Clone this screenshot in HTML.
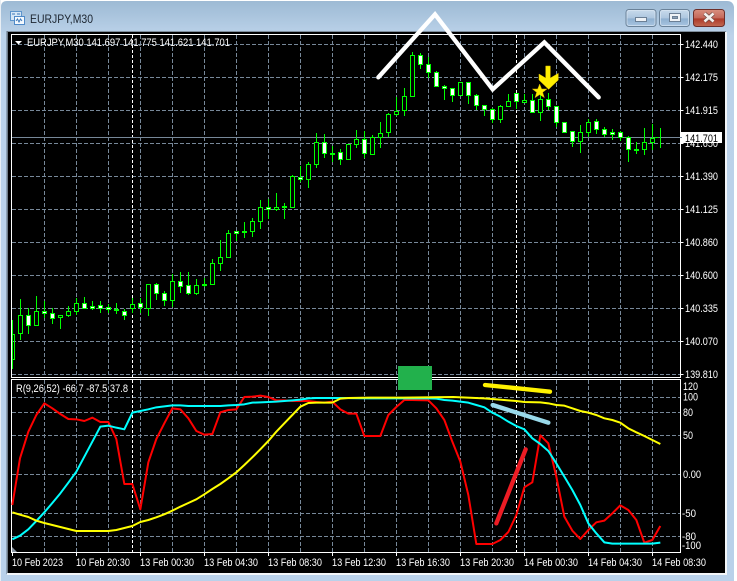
<!DOCTYPE html>
<html><head><meta charset="utf-8"><style>
html,body{margin:0;padding:0;background:#fff;width:737px;height:581px;overflow:hidden}
svg{display:block}
text{font-family:"Liberation Sans",sans-serif;font-size:11px;fill:#fff}
</style></head><body>
<svg width="737" height="581" viewBox="0 0 737 581" xmlns="http://www.w3.org/2000/svg">
<defs>
<linearGradient id="wb" x1="0" y1="0" x2="0" y2="1"><stop offset="0" stop-color="#9dbad4"/><stop offset=".06" stop-color="#bcd3ea"/><stop offset="1" stop-color="#b9d1ea"/></linearGradient>
<linearGradient id="bb" x1="0" y1="0" x2="0" y2="1"><stop offset="0" stop-color="#c9dbec"/><stop offset=".5" stop-color="#adc6df"/><stop offset=".55" stop-color="#8fb0d0"/><stop offset="1" stop-color="#a9c6e2"/></linearGradient>
<linearGradient id="cb" x1="0" y1="0" x2="0" y2="1"><stop offset="0" stop-color="#d8907f"/><stop offset=".5" stop-color="#c4685a"/><stop offset=".55" stop-color="#ad3a28"/><stop offset="1" stop-color="#c26a52"/></linearGradient>
</defs>
<path d="M1 581V7Q1 1 7 1H727Q733 1 734 7V581Z" fill="url(#wb)"/>
<rect x="0" y="0" width="1" height="581" fill="#e8eef4"/>
<rect x="7" y="31" width="719" height="543" fill="#000"/>
<rect x="7" y="31" width="719" height="1" fill="#7f8e9c"/>
<rect x="7" y="31" width="1" height="543" fill="#6d7a86"/>
<rect x="6" y="31" width="1" height="543" fill="#8da0b3"/>
<rect x="7" y="573" width="720" height="2" fill="#f2f5f8"/>
<rect x="725" y="32" width="2" height="543" fill="#f2f5f8"/>

<!-- title bar -->
<g>
<rect x="10.5" y="11.5" width="11" height="9" fill="#d5e6f6" stroke="#5e95cc"/>
<rect x="14.5" y="16.5" width="10" height="8" fill="#f4f9fe" stroke="#4f8ac8"/>
<path d="M12 14h3M17 14h3M16 21l1.500-2 1.500 3 1.500-3 1.500 2" stroke="#3c78b8" fill="none"/>
</g>
<text x="30" y="23" textLength="63" lengthAdjust="spacingAndGlyphs" style="font-size:12px;fill:#1c2530">EURJPY,M30</text>

<rect x="626" y="9.500" width="30" height="17" rx="3" fill="url(#bb)" stroke="#6a8299"/>
<rect x="627" y="10.500" width="28" height="15" rx="2" fill="none" stroke="#d8e5f2" stroke-opacity=".7"/>
<rect x="635.500" y="17.500" width="11" height="4" fill="#eef2f6" stroke="#6b7f95"/>
<rect x="659.500" y="9.500" width="30" height="17" rx="3" fill="url(#bb)" stroke="#6a8299"/>
<rect x="660.500" y="10.500" width="28" height="15" rx="2" fill="none" stroke="#d8e5f2" stroke-opacity=".7"/>
<rect x="669.500" y="13.500" width="11" height="8" fill="#eef2f6" stroke="#6b7f95"/>
<rect x="672.500" y="16.500" width="5" height="2" fill="#8ba0b5" stroke="#6b7f95"/>
<rect x="693.500" y="9.500" width="31" height="17" rx="3" fill="url(#cb)" stroke="#6d2f2a"/>
<path d="M704.500 13.500l9 8M713.500 13.500l-9 8" stroke="#6d4a44" stroke-width="4"/>
<path d="M704.500 13.500l9 8M713.500 13.500l-9 8" stroke="#f4f1ee" stroke-width="2.600"/>

<!-- grid -->
<g stroke="#778899" fill="none" stroke-dasharray="4 2" shape-rendering="crispEdges">
<path d="M12 44.500H680M12 77.500H680M12 110.500H680M12 143.500H680M12 176.500H680M12 209.500H680M12 242.500H680M12 275.500H680M12 308.500H680M12 341.500H680M12 374.500H680"/>
<path d="M12 397.500H680M12 412.500H680M12 435.500H680M12 474.500H680M12 513.500H680M12 536.500H680"/>
<path d="M44.500 35V378M76.500 35V378M108.500 35V378M140.500 35V378M172.500 35V378M204.500 35V378M236.500 35V378M268.500 35V378M300.500 35V378M332.500 35V378M364.500 35V378M396.500 35V378M428.500 35V378M460.500 35V378M492.500 35V378M524.500 35V378M556.500 35V378M588.500 35V378M620.500 35V378M652.500 35V378"/>
<path d="M44.500 380V552M76.500 380V552M108.500 380V552M140.500 380V552M172.500 380V552M204.500 380V552M236.500 380V552M268.500 380V552M300.500 380V552M332.500 380V552M364.500 380V552M396.500 380V552M428.500 380V552M460.500 380V552M492.500 380V552M524.500 380V552M556.500 380V552M588.500 380V552M620.500 380V552M652.500 380V552"/>
</g>
<g stroke="#fff" fill="none" stroke-dasharray="3 2" shape-rendering="crispEdges">
<path d="M132.500 35V378M516.500 35V378M132.500 380V552M516.500 380V552"/>
</g>
<path d="M12 137.500H680" stroke="#778899" shape-rendering="crispEdges"/>

<!-- candles -->
<g stroke="#00ff00" shape-rendering="crispEdges" fill="none">
<path d="M12.500 320V369M20.500 299V340M28.500 308V334M36.500 296V326M44.500 301V318M52.500 308V324M60.500 315V329M68.500 306V317M76.500 298V315M84.500 297V309M92.500 301V310M100.500 301V313M108.500 304V313M116.500 303V314M124.500 309V320M132.500 298V313M140.500 298V313M148.500 284V316M156.500 283V300M164.500 291V306M172.500 274V307M180.500 272V293M188.500 272V295M196.500 279V295M204.500 278V287M212.500 259V284M220.500 240V271M228.500 230V257M236.500 231V241M244.500 222V238M252.500 218V237M260.500 200V229M268.500 199V219M276.500 193V211M284.500 203V219M292.500 175V208M300.500 166V182M308.500 162V188M316.500 133V168M324.500 134V158M332.500 146V162M340.500 149V165M348.500 144V159M356.500 130V148M364.500 131V158M372.500 135V154M380.500 122V148M388.500 113V137M396.500 97V116M404.500 88V116M412.500 52V96M420.500 53V69M428.500 57V78M436.500 71V87M444.500 85V100M452.500 88V102M460.500 82V96M468.500 82V104M476.500 94V110M484.500 105V116M492.500 108V123M500.500 105V123M508.500 94V107M516.500 93V109M524.500 94V103M532.500 94V113M540.500 94V121M548.500 93V110M556.500 106V127M564.500 122V132M572.500 131V147M580.500 125V153M588.500 119V137M596.500 119V134M604.500 127V137M612.500 129V140M620.500 131V141M628.500 136V162M636.500 142V154M644.500 128V155M652.500 124V150M660.500 128V148"/>
<path d="M12 334.500H14.500V359.500H12"/>
<path fill="#000" d="M18.500 315.500h4V333.500h-4zM34.500 311.500h4V325.500h-4zM58.500 315.500h4V317.500h-4zM66.500 311.500h4V315.500h-4zM74.500 303.500h4V311.500h-4zM130.500 304.500h4V308.500h-4zM146.500 284.500h4V308.500h-4zM170.500 281.500h4V300.500h-4zM194.500 285.500h4V293.500h-4zM210.500 263.500h4V284.500h-4zM218.500 257.500h4V263.500h-4zM226.500 233.500h4V257.500h-4zM250.500 221.500h4V231.500h-4zM258.500 207.500h4V221.500h-4zM274.500 207.500h4V209.500h-4zM290.500 176.500h4V207.500h-4zM306.500 164.500h4V179.500h-4zM314.500 142.500h4V164.500h-4zM346.500 144.500h4V159.500h-4zM354.500 139.500h4V144.500h-4zM370.500 137.500h4V154.500h-4zM378.500 133.500h4V137.500h-4zM386.500 114.500h4V132.500h-4zM394.500 111.500h4V114.500h-4zM402.500 96.500h4V110.500h-4zM410.500 55.500h4V96.500h-4zM458.500 82.500h4V95.500h-4zM498.500 106.500h4V119.500h-4zM506.500 101.500h4V106.500h-4zM522.500 100.500h4V102.500h-4zM538.500 99.500h4V112.500h-4zM578.500 132.500h4V141.500h-4zM586.500 122.500h4V132.500h-4zM642.500 142.500h4V149.500h-4zM650.500 138.500h4V142.500h-4z"/>
<path fill="#fff" d="M26.500 315.500h4V325.500h-4zM42.500 311.500h4V313.500h-4zM50.500 313.500h4V318.500h-4zM82.500 303.500h4V308.500h-4zM90.500 306.500h4V308.500h-4zM98.500 305.500h4V308.500h-4zM106.500 307.500h4V309.500h-4zM114.500 309.500h4V310.500h-4zM122.500 311.500h4V315.500h-4zM138.500 303.500h4V307.500h-4zM154.500 284.500h4V293.500h-4zM162.500 293.500h4V300.500h-4zM178.500 281.500h4V286.500h-4zM186.500 285.500h4V293.500h-4zM202.500 284.500h4V285.500h-4zM234.500 231.500h4V233.500h-4zM242.500 231.500h4V232.500h-4zM266.500 207.500h4V209.500h-4zM282.500 206.500h4V207.500h-4zM298.500 177.500h4V179.500h-4zM322.500 142.500h4V153.500h-4zM330.500 153.500h4V154.500h-4zM338.500 152.500h4V159.500h-4zM362.500 139.500h4V153.500h-4zM418.500 55.500h4V64.500h-4zM426.500 64.500h4V72.500h-4zM434.500 72.500h4V86.500h-4zM442.500 86.500h4V88.500h-4zM450.500 88.500h4V95.500h-4zM466.500 82.500h4V95.500h-4zM474.500 95.500h4V105.500h-4zM482.500 105.500h4V109.500h-4zM490.500 109.500h4V119.500h-4zM514.500 93.500h4V101.500h-4zM530.500 100.500h4V112.500h-4zM546.500 99.500h4V106.500h-4zM554.500 106.500h4V122.500h-4zM562.500 122.500h4V132.500h-4zM570.500 131.500h4V141.500h-4zM594.500 121.500h4V129.500h-4zM602.500 129.500h4V134.500h-4zM610.500 132.500h4V134.500h-4zM618.500 132.500h4V137.500h-4zM626.500 137.500h4V149.500h-4zM634.500 149.500h4V150.500h-4zM658.500 137.500h-4"/>
</g>

<!-- panes -->
<g stroke="#fff" fill="none" shape-rendering="crispEdges">
<path d="M11.500 34.500H680.500V377.500H11.500ZM11.500 379.500H680.500V552.500H11.500Z"/>
<path d="M680.500 44.500h3M680.500 77.500h3M680.500 110.500h3M680.500 143.500h3M680.500 176.500h3M680.500 209.500h3M680.500 242.500h3M680.500 275.500h3M680.500 308.500h3M680.500 341.500h3M680.500 374.500h3"/>
<path d="M12.500 552V556M76.500 552V556M140.500 552V556M204.500 552V556M268.500 552V556M332.500 552V556M396.500 552V556M460.500 552V556M524.500 552V556M588.500 552V556M652.500 552V556"/>
</g>
<path d="M12 547L17 552H12Z" fill="#8a96a2"/>

<!-- header text -->
<path d="M15 41h7l-3.500 3.500z" fill="#fff"/>
<text x="27" y="46" textLength="203" lengthAdjust="spacingAndGlyphs">EURJPY,M30  141.697 141.775 141.621 141.701</text>
<text x="16" y="392" textLength="112" lengthAdjust="spacingAndGlyphs">R(9,26,52) -66.7 -87.5 37.8</text>

<!-- indicator -->
<g transform="translate(0 370) scale(.33333)" fill="none" stroke-width="6" stroke-linejoin="round">
<polyline stroke="#ff0000" points="37,405 60,265 85,185 109,135 133,100 157,115 181,132 205,147 229,148 253,153 277,143 301,156 325,156 349,207 373,342 397,342 421,418 445,277 469,207 493,160 517,115 541,118 565,145 589,183 613,194 637,192 661,127 685,120 709,118 733,81 757,80 781,77 805,81 829,91 853,91 877,93 901,93 925,93 949,96 973,98 997,95 1021,118 1045,131 1069,131 1093,198 1110,198"/>
</g>
<g transform="translate(370 370) scale(.33333)" fill="none" stroke-width="6" stroke-linejoin="round">
<polyline stroke="#ff0000" points="0,198 31,198 55,135 79,111 103,90 127,90 175,91 199,115 223,150 247,215 271,275 295,375 319,522 343,522 367,522 391,510 415,486 439,435 463,352 487,337 511,196 535,220 559,320 583,440 607,482 631,507 655,480 679,457 703,452 727,430 751,406 775,420 799,450 823,518 847,510 871,468"/>
</g>
<g transform="translate(0 370) scale(.33333)" fill="none" stroke-width="6" stroke-linejoin="round">
<polyline stroke="#00ffff" points="37,508 60,497 85,478 109,453 133,427 157,399 181,370 205,338 229,305 253,260 277,215 301,170 325,167 349,173 373,178 397,128 421,123 445,118 469,112 493,109 517,106 541,106 565,108 589,108 613,108 637,108 661,108 685,106 709,105 733,103 757,98 781,97 805,96 829,95 853,93 877,91 901,89 925,85 949,84 973,84 997,84 1021,84 1110,85"/>
</g>
<g transform="translate(370 370) scale(.33333)" fill="none" stroke-width="6" stroke-linejoin="round">
<polyline stroke="#00ffff" points="0,85 175,85 199,86 223,90 247,92 271,95 295,98 319,105 343,112 367,128 391,140 415,155 439,168 463,178 487,205 511,222 535,243 559,280 583,320 607,360 631,405 655,460 679,490 703,517 727,521 751,521 775,521 799,521 823,521 847,521 871,518"/>
</g>
<g transform="translate(0 370) scale(.33333)" fill="none" stroke-width="6" stroke-linejoin="round">
<polyline stroke="#ffff00" points="37,427 60,434 85,441 109,452 133,459 157,465 181,471 205,477 229,483 253,483 277,483 301,483 325,483 349,480 373,474 397,468 421,456 445,450 469,442 493,433 517,422 541,410 565,399 589,388 613,373 637,357 661,342 685,325 709,307 733,285 757,262 781,238 805,213 829,185 853,160 877,135 901,110 925,99 949,98 973,98 997,98 1021,86 1045,84 1110,83"/>
</g>
<g transform="translate(370 370) scale(.33333)" fill="none" stroke-width="6" stroke-linejoin="round">
<polyline stroke="#ffff00" points="0,83 100,83 250,81 343,85 367,87 415,91 439,93 463,96 511,97 535,100 559,105 583,107 607,115 631,123 655,128 679,135 703,145 727,150 751,158 775,175 799,187 823,198 847,210 871,222"/>
<path d="M345 45L540 65" stroke="#fff200" stroke-width="13" stroke-linecap="round"/>
<path d="M368 105L535 158" stroke="#99d9ea" stroke-width="13" stroke-linecap="round"/>
<path d="M467 238L379 460" stroke="#ed1c24" stroke-width="13" stroke-linecap="round"/>
</g>
<rect x="398" y="366" width="34" height="24" fill="#22b14c"/>

<!-- drawings on main -->
<g transform="translate(370 0) scale(.33333)">
<path d="M25 232L195 43L368 268L523 127L686 292" fill="none" stroke="#fff" stroke-width="13" stroke-linecap="round"/>
<path d="M527 198H541V234L565 220V240L536 268L507 240V222L527 234Z" fill="#ffee00" stroke="#d8b800" stroke-width="1.500"/>
<path d="M509 252L515 267L531 267L518 277L523 293L509 284L495 293L500 277L487 267L503 267Z" fill="#ffee00" stroke="#c8a800" stroke-width="1.500"/>
</g>

<!-- price axis -->
<g>
<text x="685" y="48" textLength="33" lengthAdjust="spacingAndGlyphs">142.440</text>
<text x="685" y="81" textLength="33" lengthAdjust="spacingAndGlyphs">142.175</text>
<text x="685" y="114" textLength="33" lengthAdjust="spacingAndGlyphs">141.915</text>
<text x="685" y="147" textLength="33" lengthAdjust="spacingAndGlyphs">141.650</text>
<text x="685" y="180" textLength="33" lengthAdjust="spacingAndGlyphs">141.390</text>
<text x="685" y="213" textLength="33" lengthAdjust="spacingAndGlyphs">141.125</text>
<text x="685" y="246" textLength="33" lengthAdjust="spacingAndGlyphs">140.860</text>
<text x="685" y="279" textLength="33" lengthAdjust="spacingAndGlyphs">140.600</text>
<text x="685" y="312" textLength="33" lengthAdjust="spacingAndGlyphs">140.335</text>
<text x="685" y="345" textLength="33" lengthAdjust="spacingAndGlyphs">140.070</text>
<text x="685" y="378" textLength="33" lengthAdjust="spacingAndGlyphs">139.810</text>
<path d="M681 132h41v11h-41z" fill="#fff"/>
<path d="M680 137.500h2" stroke="#778899"/>
<text x="685" y="142" textLength="33" lengthAdjust="spacingAndGlyphs" style="fill:#000">141.701</text>
<text x="683" y="390" textLength="15" lengthAdjust="spacingAndGlyphs">120</text>
<text x="683" y="400.500" textLength="15" lengthAdjust="spacingAndGlyphs">100</text>
<text x="683" y="416" textLength="10" lengthAdjust="spacingAndGlyphs">80</text>
<text x="683" y="439" textLength="10" lengthAdjust="spacingAndGlyphs">50</text>
<text x="683" y="478" textLength="18" lengthAdjust="spacingAndGlyphs">0.00</text>
<text x="682" y="517" textLength="14" lengthAdjust="spacingAndGlyphs">-50</text>
<text x="682" y="540" textLength="14" lengthAdjust="spacingAndGlyphs">-80</text>
<text x="682" y="549" textLength="19" lengthAdjust="spacingAndGlyphs">-100</text>
</g>

<!-- time axis -->
<g>
<text x="12" y="566" textLength="51" lengthAdjust="spacingAndGlyphs">10 Feb 2023</text>
<text x="76" y="566" textLength="54" lengthAdjust="spacingAndGlyphs">10 Feb 20:30</text>
<text x="140" y="566" textLength="54" lengthAdjust="spacingAndGlyphs">13 Feb 00:30</text>
<text x="204" y="566" textLength="54" lengthAdjust="spacingAndGlyphs">13 Feb 04:30</text>
<text x="268" y="566" textLength="54" lengthAdjust="spacingAndGlyphs">13 Feb 08:30</text>
<text x="332" y="566" textLength="54" lengthAdjust="spacingAndGlyphs">13 Feb 12:30</text>
<text x="396" y="566" textLength="54" lengthAdjust="spacingAndGlyphs">13 Feb 16:30</text>
<text x="460" y="566" textLength="54" lengthAdjust="spacingAndGlyphs">13 Feb 20:30</text>
<text x="524" y="566" textLength="54" lengthAdjust="spacingAndGlyphs">14 Feb 00:30</text>
<text x="588" y="566" textLength="54" lengthAdjust="spacingAndGlyphs">14 Feb 04:30</text>
<text x="652" y="566" textLength="54" lengthAdjust="spacingAndGlyphs">14 Feb 08:30</text>
</g>
</svg>
</body></html>
